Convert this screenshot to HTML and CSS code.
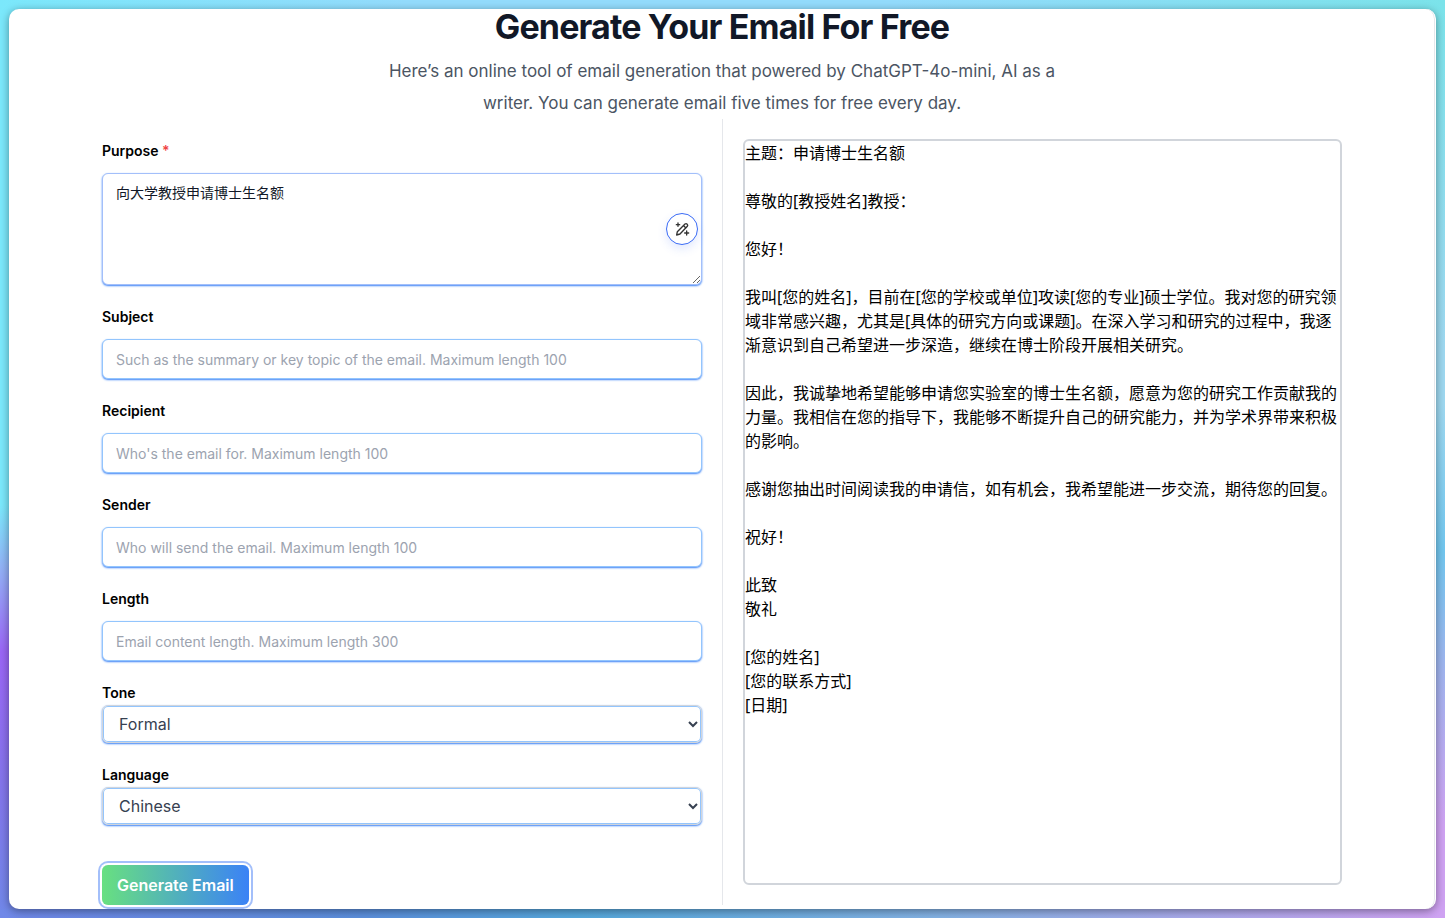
FILE: index.html
```
<!DOCTYPE html>
<html lang="en">
  <head>
    <meta charset="UTF-8" />
    <meta name="viewport" content="width=device-width, initial-scale=1.0" />
    <title>Generate Your Email For Free</title>
    <link rel="stylesheet" href="styles.css">
  </head>
  <body>
    <main class="card">
      <header class="intro">
        <h1>Generate Your Email For Free</h1>
        <p>Here’s an online tool of email generation that powered by ChatGPT-4o-mini, AI as a writer. You can generate email five times for free every day.</p>
      </header>
      <div class="columns">
        <form class="email-form">
          <div class="field">
            <label for="purpose">Purpose <span class="required">*</span></label>
            <div class="textarea-wrap">
              <textarea id="purpose" required>向大学教授申请博士生名额</textarea>
              <button type="button" class="polish" aria-label="Polish text">
                <svg viewBox="0 0 24 24" width="16" height="16" fill="none" stroke="currentColor" stroke-width="2" stroke-linejoin="round" stroke-linecap="round">
                  <path d="M4 21l1-5L16.500 4.500a2.500 2.500 0 0 1 3.500 3.500L9 19.500z" />
                  <path d="M14.500 7l3 3" />
                  <path d="M6 3v5M3.500 5.500h5M19 15v6M16 18h6" />
                </svg>
              </button>
            </div>
          </div>
          <div class="field">
            <label for="subject">Subject</label>
            <input type="text" id="subject" maxlength="100" placeholder="Such as the summary or key topic of the email. Maximum length 100" />
          </div>
          <div class="field">
            <label for="recipient">Recipient</label>
            <input type="text" id="recipient" maxlength="100" placeholder="Who's the email for. Maximum length 100" />
          </div>
          <div class="field">
            <label for="sender">Sender</label>
            <input type="text" id="sender" maxlength="100" placeholder="Who will send the email. Maximum length 100" />
          </div>
          <div class="field">
            <label for="length">Length</label>
            <input type="text" id="length" placeholder="Email content length. Maximum length 300" />
          </div>
          <div class="field select-field">
            <label for="tone">Tone</label>
            <select id="tone">
              <option>Formal</option>
            </select>
          </div>
          <div class="field select-field">
            <label for="language">Language</label>
            <select id="language">
              <option>Chinese</option>
            </select>
          </div>
          <button type="button" class="generate">Generate Email</button>
        </form>
        <section class="result">
          <div class="output" lang="zh-CN">主题：申请博士生名额

尊敬的[教授姓名]教授：

您好！

我叫[您的姓名]，目前在[您的学校或单位]攻读[您的专业]硕士学位。我对您的研究领域非常感兴趣，尤其是[具体的研究方向或课题]。在深入学习和研究的过程中，我逐渐意识到自己希望进一步深造，继续在博士阶段开展相关研究。

因此，我诚挚地希望能够申请您实验室的博士生名额，愿意为您的研究工作贡献我的力量。我相信在您的指导下，我能够不断提升自己的研究能力，并为学术界带来积极的影响。

感谢您抽出时间阅读我的申请信，如有机会，我希望能进一步交流，期待您的回复。

祝好！

此致
敬礼

[您的姓名]
[您的联系方式]
[日期]</div>
        </section>
      </div>
    </main>
  </body>
</html>
```
FILE: styles.css
```
* {
  box-sizing: border-box;
}
body {
  margin: 0;
  padding: 9px;
  min-height: 100vh;
  display: flex;
  font-family: Inter, "Noto Sans CJK SC", sans-serif;
  color: #000000;
  background:
    linear-gradient(to right, #7be8fb, #93dbfc 28%, #93dbfc 62%, #7be3ea) top / 100% 9px no-repeat,
    linear-gradient(to right, #7088e8, #5c8fdc 25%, #56a8dc 40%, #84b2e4 65%, #cfa2f2) bottom / 100% 9px no-repeat,
    linear-gradient(to bottom, #7be3ea, #9ed8f0 38%, #9ed8f0 44%, #72c6ee 60%, #a0b4ee 73%, #cfa2f2 90%) right / 50% 100% no-repeat,
    linear-gradient(to bottom, #7be8fb 55%, #92b0f5 62%, #9a66f5 71%, #8474ea 85%, #7088e8) left / 50% 100% no-repeat;
}
.card {
  flex: 1;
  padding-bottom: 4px;
  background: #ffffff;
  border-right: 1px solid #ffffff;
  border-radius: 10px;
  box-shadow: inset -1px 0 #e5e7eb, 0 2px 8px rgba(0, 0, 0, 0.4);
}
.intro {
  text-align: center;
}
.intro h1 {
  margin: 0;
  font-size: 34px;
  line-height: 36px;
  font-weight: 700;
  letter-spacing: -0.025em;
  color: #111827;
}
.intro p {
  max-width: 672px;
  margin: 10px auto 0;
  font-size: 17px;
  line-height: 32px;
  color: #4b5563;
}
.columns {
  display: grid;
  grid-template-columns: 1fr 1fr;
  max-width: 1280px;
  margin: 0 auto;
}
.email-form {
  display: flex;
  flex-direction: column;
  gap: 20px;
  padding: 20px 20px 0;
}
.field {
  display: flex;
  flex-direction: column;
  gap: 10px;
}
.select-field {
  gap: 0;
}
label {
  font-size: 14px;
  line-height: 24px;
  font-weight: 600;
}
.required {
  color: #ef4444;
}
input,
textarea,
select {
  width: 100%;
  font-family: inherit;
  border-radius: 6px;
  background: #ffffff;
}
input,
textarea {
  padding: 0 13px;
  font-size: 14px;
  color: #111827;
  border: 1px solid #93c5fd;
  box-shadow: 0 1px 2px #3b82f6;
}
input {
  height: 40px;
}
input::placeholder {
  color: #9ca3af;
}
.textarea-wrap {
  position: relative;
}
textarea {
  display: block;
  height: 112px;
  padding: 7px 13px;
  line-height: 24px;
  border-color: #a3bffa;
}
.polish {
  position: absolute;
  right: 4px;
  top: 40px;
  width: 32px;
  height: 32px;
  display: flex;
  align-items: center;
  justify-content: center;
  padding: 0;
  color: #333333;
  background: #ffffff;
  border: 1px solid #3b6cf6;
  border-radius: 50%;
  box-shadow: 0 4px 10px rgba(59, 108, 246, 0.15);
}
select {
  height: 38px;
  padding: 0 12px;
  font-size: 16px;
  color: #374151;
  border: 1px solid #d1d5db;
  box-shadow: inset 0 0 0 1px #93c5fd, 0 1px 2px #3b82f6;
}
.generate {
  align-self: flex-start;
  height: 40px;
  margin-top: 20px;
  padding: 0 15px;
  font-family: inherit;
  font-size: 16px;
  font-weight: 600;
  color: #ffffff;
  background: linear-gradient(to right, #68e080, #3b82f6);
  border: none;
  border-radius: 6px;
  box-shadow: 0 0 0 2px #ffffff, 0 0 0 4px #a3bffa;
  cursor: pointer;
}
.result {
  padding: 20px;
  border-left: 1px solid #e5e7eb;
}
.output {
  height: 100%;
  font-family: "Noto Sans", "Noto Sans CJK SC", sans-serif;
  font-size: 16px;
  line-height: 24px;
  white-space: pre-wrap;
  border: 2px solid #d1d5db;
  border-radius: 6px;
}
```
